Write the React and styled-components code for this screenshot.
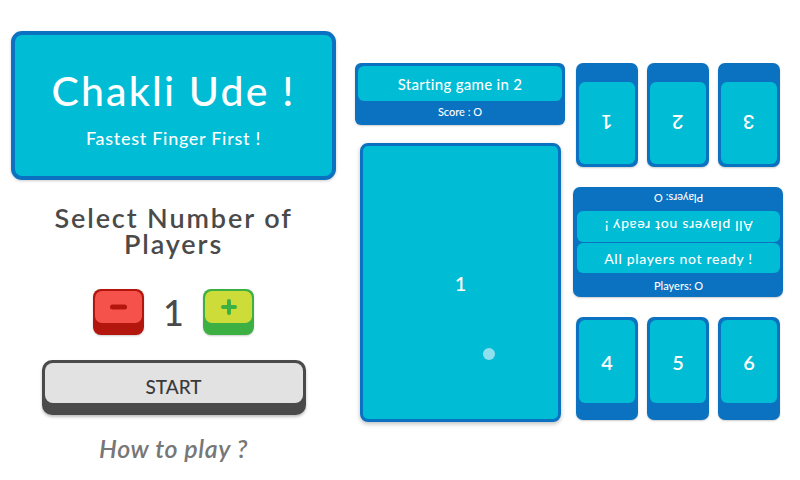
import React from "react";
import styled, { createGlobalStyle } from "styled-components";

const CYAN = "#00bcd4";
const BLUE = "#0b72c1";
const FONT = `"Lato", "Noto Sans", sans-serif`;

const Global = createGlobalStyle`
  html, body { margin: 0; padding: 0; background: #fff; }
  body { font-family: ${FONT}; width: 800px; height: 480px; overflow: hidden; }
`;

const Page = styled.div`
  display: flex;
  align-items: flex-start;
  padding: 31px 0 0 11px;
`;

const LeftCol = styled.div`
  width: 325px;
  display: flex;
  flex-direction: column;
  align-items: center;
`;

const TitleCard = styled.div`
  box-sizing: border-box;
  width: 325px;
  height: 149px;
  background: ${CYAN};
  border: 4px solid ${BLUE};
  border-radius: 11px;
  display: flex;
  flex-direction: column;
  align-items: center;
  color: #fff;
  box-shadow: 0 1px 3px rgba(0,0,0,0.2);
`;

const Title = styled.div`
  font-size: 41px;
  font-weight: 500;
  margin-top: 34px;
  line-height: 44px;
  letter-spacing: 2.2px;
`;

const Subtitle = styled.div`
  font-size: 18px;
  font-weight: 500;
  margin-top: 14px;
  line-height: 22px;
  letter-spacing: 0.7px;
`;

const Heading = styled.div`
  margin-top: 25px;
  font-size: 27px;
  line-height: 26px;
  font-weight: 600;
  color: #4a4a4a;
  text-align: center;
  width: 290px;
  letter-spacing: 1.9px;
`;

const CounterRow = styled.div`
  display: flex;
  align-items: center;
  margin-top: 32px;
`;

const StepBtn = styled.div`
  box-sizing: border-box;
  width: 51px;
  height: 46px;
  border-radius: 8px;
  background: ${(p) => p.$dark};
  padding: 2px 2px 12px;
  box-shadow: 0 1px 2px rgba(0,0,0,0.2);
`;

const StepFace = styled.div`
  height: 100%;
  border-radius: 7px;
  background: ${(p) => p.$face};
  display: flex;
  align-items: center;
  justify-content: center;
`;

const Count = styled.div`
  width: 59px;
  text-align: center;
  font-size: 36px;
  color: #4a4a4a;
  font-weight: 500;
  line-height: 46px;
`;

const StartBtn = styled.div`
  box-sizing: border-box;
  margin-top: 25px;
  width: 264px;
  height: 55px;
  border-radius: 10px;
  background: #4a4a4a;
  padding: 3px 3px 12px;
  box-shadow: 0 2px 3px rgba(0,0,0,0.25);
`;

const StartFace = styled.div`
  box-sizing: border-box;
  height: 100%;
  border-radius: 8px;
  background: #e2e2e2;
  display: flex;
  align-items: center;
  justify-content: center;
  padding-top: 6px;
  font-size: 19px;
  color: #3a3a3a;
  font-weight: 500;
`;

const HowTo = styled.div`
  margin-top: 18px;
  font-size: 25px;
  font-style: italic;
  color: #777;
  font-weight: 600;
  letter-spacing: 0.6px;
`;

const Board = styled.div`
  display: flex;
  margin-left: 19px;
  margin-top: 32px;
  gap: 8px;
`;

const BoardLeft = styled.div`
  width: 210px;
  display: flex;
  flex-direction: column;
`;

const StatusPanel = styled.div`
  box-sizing: border-box;
  height: 62px;
  background: ${BLUE};
  border-radius: 6px;
  padding: 3px;
  display: flex;
  flex-direction: column;
  box-shadow: 0 1px 2px rgba(0,0,0,0.2);
`;

const LightBox = styled.div`
  height: ${(p) => p.$h}px;
  flex: none;
  background: ${CYAN};
  border-radius: 6px;
  display: flex;
  align-items: center;
  justify-content: center;
  color: #fff;
  font-size: ${(p) => p.$fs || 15}px;
  font-weight: 500;
  letter-spacing: ${(p) => p.$ls || 0.3}px;
`;

const SmallText = styled.div`
  flex: 1;
  display: flex;
  align-items: center;
  justify-content: center;
  color: #fff;
  font-size: 11px;
  font-weight: 500;
`;

const Flip = styled.span`
  display: inline-block;
  transform: rotate(180deg);
`;

const BigCard = styled.div`
  position: relative;
  box-sizing: border-box;
  margin: 18px 4px 0 5px;
  height: 279px;
  background: ${CYAN};
  border: 3px solid ${BLUE};
  border-radius: 8px;
  display: flex;
  align-items: center;
  justify-content: center;
  color: #fff;
  font-size: 20px;
  font-weight: 500;
  box-shadow: 0 2px 4px rgba(0,0,0,0.25);
`;

const Dot = styled.div`
  position: absolute;
  left: 120px;
  top: 202px;
  width: 12px;
  height: 12px;
  border-radius: 50%;
  background: #8fe0ee;
`;

const BoardRight = styled.div`
  width: 210px;
  display: flex;
  flex-direction: column;
`;

const CardRow = styled.div`
  display: flex;
  gap: 9px;
  margin-left: 3px;
  margin-top: ${(p) => p.$mt || 0}px;
`;

const PlayerCard = styled.div`
  box-sizing: border-box;
  width: 62px;
  height: ${(p) => p.$h}px;
  background: ${BLUE};
  border-radius: 7px;
  padding: ${(p) => (p.$top ? "19px 3px 3px" : "3px 3px 17px")};
  box-shadow: 0 1px 2px rgba(0,0,0,0.2);
`;

const CardFace = styled.div`
  height: 100%;
  border-radius: 6px;
  background: ${CYAN};
  display: flex;
  align-items: center;
  justify-content: center;
  color: #fff;
  font-size: 20px;
  font-weight: 600;
`;

const MidPanel = styled.div`
  box-sizing: border-box;
  margin-top: 20px;
  height: 110px;
  background: ${BLUE};
  border-radius: 7px;
  padding: 0 3px 0 4px;
  display: flex;
  flex-direction: column;
  gap: 1px;
  box-shadow: 0 1px 2px rgba(0,0,0,0.2);
`;

const Minus = () => (
  <svg width="17" height="6" viewBox="0 0 17 6">
    <rect x="0" y="0.5" width="17" height="5" rx="2.5" fill="#b3160c" />
  </svg>
);

const Plus = () => (
  <svg width="16" height="16" viewBox="0 0 16 16">
    <rect x="0" y="6" width="16" height="4" rx="2" fill="#3cb043" />
    <rect x="6" y="0" width="4" height="16" rx="2" fill="#3cb043" />
  </svg>
);

export default function App() {
  return (
    <>
      <Global />
      <Page>
        <LeftCol>
          <TitleCard>
            <Title>Chakli Ude !</Title>
            <Subtitle>Fastest Finger First !</Subtitle>
          </TitleCard>
          <Heading>Select Number of Players</Heading>
          <CounterRow>
            <StepBtn $dark="#b3160c">
              <StepFace $face="#f4524a"><Minus /></StepFace>
            </StepBtn>
            <Count>1</Count>
            <StepBtn $dark="#3cb043">
              <StepFace $face="#cddc39"><Plus /></StepFace>
            </StepBtn>
          </CounterRow>
          <StartBtn>
            <StartFace>START</StartFace>
          </StartBtn>
          <HowTo>How to play ?</HowTo>
        </LeftCol>
        <Board>
          <BoardLeft>
            <StatusPanel>
              <LightBox $h={35}>Starting game in 2</LightBox>
              <SmallText>Score : O</SmallText>
            </StatusPanel>
            <BigCard>
              1
              <Dot />
            </BigCard>
          </BoardLeft>
          <BoardRight>
            <CardRow>
              {[1, 2, 3].map((n) => (
                <PlayerCard key={n} $top $h={104}>
                  <CardFace><Flip>{n}</Flip></CardFace>
                </PlayerCard>
              ))}
            </CardRow>
            <MidPanel>
              <SmallText><Flip>Players: O</Flip></SmallText>
              <LightBox $h={31} $fs={14} $ls={0.7}><Flip>All players not ready !</Flip></LightBox>
              <LightBox $h={30} $fs={14} $ls={0.7}>All players not ready !</LightBox>
              <SmallText>Players: O</SmallText>
            </MidPanel>
            <CardRow $mt={20}>
              {[4, 5, 6].map((n) => (
                <PlayerCard key={n} $h={103}>
                  <CardFace>{n}</CardFace>
                </PlayerCard>
              ))}
            </CardRow>
          </BoardRight>
        </Board>
      </Page>
    </>
  );
}
